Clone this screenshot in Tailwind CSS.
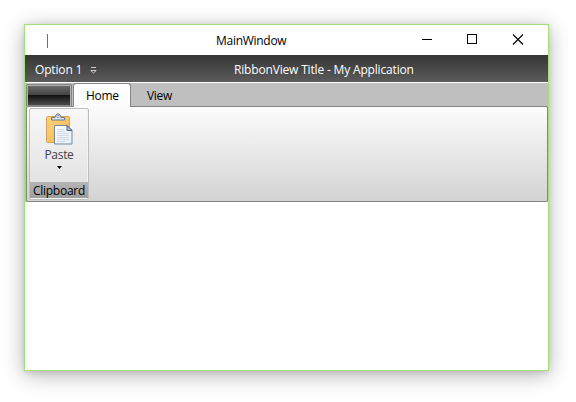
<!DOCTYPE html>
<html lang="en">
<head>
<meta charset="utf-8">
<title>MainWindow</title>
<script src="https://cdn.jsdelivr.net/npm/@tailwindcss/browser@4"></script>
</head>
<body class="h-[402px] w-[576px] overflow-hidden bg-white p-6 font-['Open_Sans','Noto_Sans',sans-serif] text-[12px] leading-4 text-black">
<main class="flex h-[347px] w-[525px] flex-col border border-[#a4df7c] bg-white shadow-[0_4px_20px_rgba(0,0,0,0.30),0_1px_5px_rgba(0,0,0,0.12)]">
  <header class="grid h-[30px] shrink-0 grid-cols-[191px_1fr_138px]">
    <div class="pt-[9px] pl-[22px]"><div class="h-[14px] w-px bg-[#707070]"></div></div>
    <h1 class="pt-2 tracking-[-0.28px] whitespace-nowrap">MainWindow</h1>
    <svg class="h-[30px] w-[138px]" viewBox="0 0 138 30" fill="none" stroke="#000" shape-rendering="crispEdges">
      <path d="M12 14.5h10M57.500 9.500h9v9h-9z"/>
      <path d="M103 9.500l10 10M113 9.500l-10 10" shape-rendering="auto" stroke-width="1.1"/>
    </svg>
  </header>
  <div class="grid h-[27px] shrink-0 grid-cols-[209px_1fr] bg-linear-to-b from-[#363636] to-[#5b5b5b] text-white">
    <div class="flex gap-2 pt-[7px] pl-[10px]">
      <span class="tracking-[-0.16px] whitespace-nowrap">Option 1</span>
      <svg class="mt-[5px] h-[7px] w-[7px]" viewBox="0 0 7 7" fill="none" stroke="#e8e8e8"><path d="M1 .5h5M.8 3.500h5.400L3.500 6z" stroke-width=".8"/></svg>
    </div>
    <div class="pt-[7px] tracking-[-0.17px] whitespace-nowrap">RibbonView Title - My Application</div>
  </div>
  <section class="flex h-[120px] shrink-0 flex-col border-t border-white bg-[#bfbfbf]">
    <nav class="flex h-[23px] shrink-0 pl-px">
      <div class="mt-px h-[22px] w-[46px] rounded-t-[2px] border border-b-0 border-[#858585] bg-[#b0b0b0] p-px"><div class="flex h-[20px] w-[42px] flex-col border-b border-[#858585]"><div class="h-[9px] bg-linear-to-b from-[#696969] to-[#444]"></div><div class="h-[10px] bg-linear-to-b from-[#101010] to-[#4c4c4c]"></div></div></div>
      <div class="z-10 ml-px h-6 w-[58px] rounded-t-[3px] border border-b-0 border-[#858585] bg-linear-to-b from-white to-[#fbfbfb] pt-1 pl-3 tracking-[-0.3px]">Home</div>
      <div class="pt-[5px] pl-[16px] tracking-[-0.3px]">View</div>
    </nav>
    <div class="ml-px h-[96px] w-[522px] rounded-[2px] border border-[#858585] bg-linear-to-b from-[#fcfcfc] to-[#d3d3d3] pt-px pl-[2px]">
      <div class="flex h-[92px] w-[60px] flex-col rounded-[2px] border border-[#bdbdbd] bg-linear-to-b from-[#f8f8f8] to-[#dedede] shadow-[inset_-1px_-1px_0_#f3f3f3]">
        <div class="flex h-[73px] flex-col items-center pt-1">
          <svg class="ml-px h-8 w-8" viewBox="0 0 32 32">
            <defs><linearGradient id="board" x2="1" y2="1"><stop stop-color="#ffd47c"/><stop offset="1" stop-color="#edb552"/></linearGradient><linearGradient id="paper" x2="1" y2="1"><stop stop-color="#fff"/><stop offset="1" stop-color="#e3edf6"/></linearGradient></defs>
            <rect x="2.500" y="3.500" width="23" height="26" rx="1" fill="url(#board)" stroke="#d6a34f"/>
            <path d="M7.500 7V4.500h3.500C11.500 2 12.500 1 14 1s2.500 1 3 3.500h3.500V7z" fill="#dce4ea" stroke="#65788b"/>
            <circle cx="14" cy="3.400" r="1.200" fill="#fff" stroke="#65788b" stroke-width=".7"/>
            <path d="M10.500 12.500h12.500l5 5v13.500h-17.500z" fill="url(#paper)" stroke="#7189a3"/>
            <path d="M23 12.500v5h5z" fill="#b5c8da" stroke="#49637e"/>
            <path d="M13 16.500h7M13 18.500h8M13 20.500h12M13 22.500h12M13 24.500h12M13 26.500h12M13 28.500h8" stroke="#c6d1df" stroke-width=".8"/>
          </svg>
          <span class="mt-[2px] tracking-[-0.3px] text-[#444]">Paste</span>
          <svg class="mt-[3px] h-[3px] w-[5px]" viewBox="0 0 5 3"><path d="M0 0h5L2.500 3z"/></svg>
        </div>
        <div class="h-[16px] bg-linear-to-b from-[#b5b5b5] to-[#9d9d9d] text-center leading-[17px] tracking-[-0.25px] whitespace-nowrap">Clipboard</div>
      </div>
    </div>
  </section>
</main>
</body>
</html>
